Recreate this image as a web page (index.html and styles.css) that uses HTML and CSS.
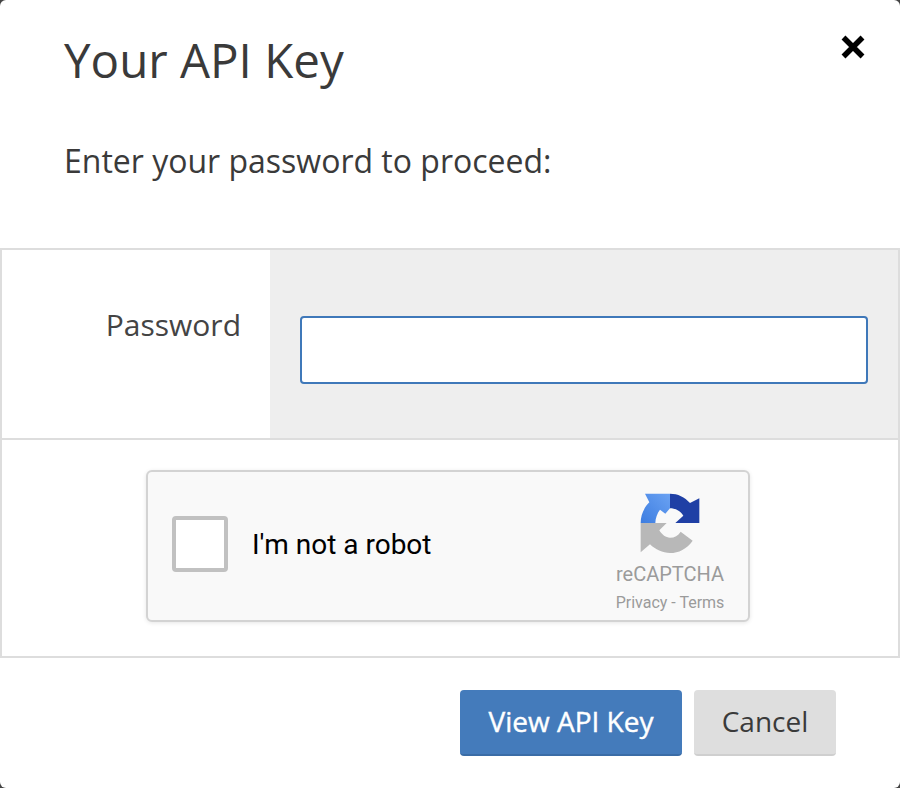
FILE: index.html
```html
<!DOCTYPE html>
<html lang="en">
<head>
<meta charset="utf-8">
<title>Your API Key</title>
<link rel="stylesheet" href="styles.css">
</head>
<body>
<div class="modal">
  <header class="modal-header">
    <h1 class="modal-title">Your API Key</h1>
    <button class="close" type="button" aria-label="Close">
      <svg class="close-icon" viewBox="0 0 24 24" width="24" height="24"><path d="M2.5 2.500 L21.500 21.500 M21.500 2.500 L2.500 21.500"/></svg>
    </button>
  </header>
  <p class="intro">Enter your password to proceed:</p>
  <form class="form-table">
    <div class="row row-password">
      <label class="label-cell" for="pw">Password</label>
      <div class="input-cell"><input id="pw" class="text-input" type="password"></div>
    </div>
    <div class="row row-captcha">
      <div class="captcha">
        <span class="captcha-box"></span>
        <span class="captcha-label">I'm not a robot</span>
        <div class="captcha-brand">
          <svg class="captcha-logo" viewBox="12 12 180 180" width="60" height="60">
            <defs>
              <linearGradient id="gb" x1="1" y1="0" x2="0" y2="1"><stop offset="0" stop-color="#6aa2f3"/><stop offset="1" stop-color="#3d7de0"/></linearGradient>
            </defs>
            <path fill="#b8b8b8" d="M14 102 H92 L70 124 C78 138 90 146 102 146 C116 146 126 140 134 128 L170 155 C152 180 128 192 102 192 C80 192 58 182 42 166 L14 190 Z"/>
            <path fill="url(#gb)" d="M14 102 C14 78 24 56 40 40 L27 14 H102 V58 L88 74 L72 62 C64 72 58 88 58 102 Z"/>
            <path fill="#1f3fa5" d="M102 14 C126 14 146 24 162 42 L190 28 V102 H118 L142 80 C134 66 118 58 102 58 Z"/>
          </svg>
          <span class="captcha-name">reCAPTCHA</span>
          <span class="captcha-links">Privacy - Terms</span>
        </div>
      </div>
    </div>
  </form>
  <footer class="modal-footer">
    <button class="btn btn-primary" type="button">View API Key</button>
    <button class="btn btn-default" type="button">Cancel</button>
  </footer>
</div>
</body>
</html>
```
FILE: styles.css
```css
* { box-sizing: border-box; }
html, body { margin: 0; padding: 0; background: #444; }
body { width: 900px; height: 788px; overflow: hidden; font-family: "Open Sans", sans-serif; color: #333; }
.modal { width: 900px; height: 788px; background: #fff; border-radius: 6px; display: flex; flex-direction: column; }
.modal-header { display: flex; justify-content: space-between; align-items: flex-start; height: 136px; padding: 28px 35px 0 64px; }
.modal-title { margin: 0; font-size: 47.500px; line-height: 64px; font-weight: 400; color: #3a3a3a; }
.close { border: 0; background: none; padding: 0; margin-top: 7px; width: 24px; height: 24px; }
.close-icon { display: block; fill: none; stroke: #000; stroke-width: 5.500; stroke-linecap: butt; }
.intro { margin: 0; padding-left: 64px; height: 112px; font-size: 32px; line-height: 50px; color: #3a3a3a; }
.form-table { border: 2px solid #ddd; height: 410px; display: flex; flex-direction: column; }
.row { display: flex; }
.row-password { height: 188px; }
.label-cell { width: 268px; padding: 53px 29px 0 0; text-align: right; font-size: 30px; line-height: 44px; color: #444; }
.input-cell { flex: 1; background: #eee; padding: 66px 30px 0 30px; }
.text-input { display: block; width: 568px; height: 68px; border: 2px solid #3f78b9; border-radius: 4px; background: #fff; outline: 0; }
.row-captcha { border-top: 2px solid #ddd; flex: 1; justify-content: center; padding-top: 30px; padding-right: 4px; }
.captcha { width: 604px; height: 152px; background: #f9f9f9; border: 2px solid #d3d3d3; border-radius: 6px; box-shadow: 0 1px 4px rgba(0,0,0,.1); display: flex; align-items: center; padding: 0 12px 4px 24px; font-family: Roboto, sans-serif; }
.captcha-box { width: 56px; height: 56px; background: #fff; border: 4px solid #c1c1c1; border-radius: 4px; flex: none; }
.captcha-label { margin-left: 24px; font-size: 28px; color: #000; }
.captcha-brand { margin-left: auto; width: 132px; align-self: flex-start; padding-top: 21px; display: flex; flex-direction: column; align-items: center; }
.captcha-logo { display: block; margin-bottom: 7px; }
.captcha-name { font-size: 20px; line-height: 28px; color: #9b9b9b; }
.captcha-links { font-size: 16px; line-height: 30px; color: #9b9b9b; }
.modal-footer { display: flex; justify-content: flex-end; gap: 12px; padding: 32px 64px 0 0; }
.btn { height: 66px; border: 0; border-radius: 4px; font-family: "Open Sans", sans-serif; font-size: 28px; padding: 0 0 2px; }
.btn-primary { width: 222px; background: #447bbb; color: #fff; border-bottom: 2px solid #3a6ca6; font-weight: 500; -webkit-text-stroke: 0.4px #fff; }
.btn-default { width: 142px; background: #dedede; color: #3a3a3a; border-bottom: 2px solid #cfcfcf; }
```
